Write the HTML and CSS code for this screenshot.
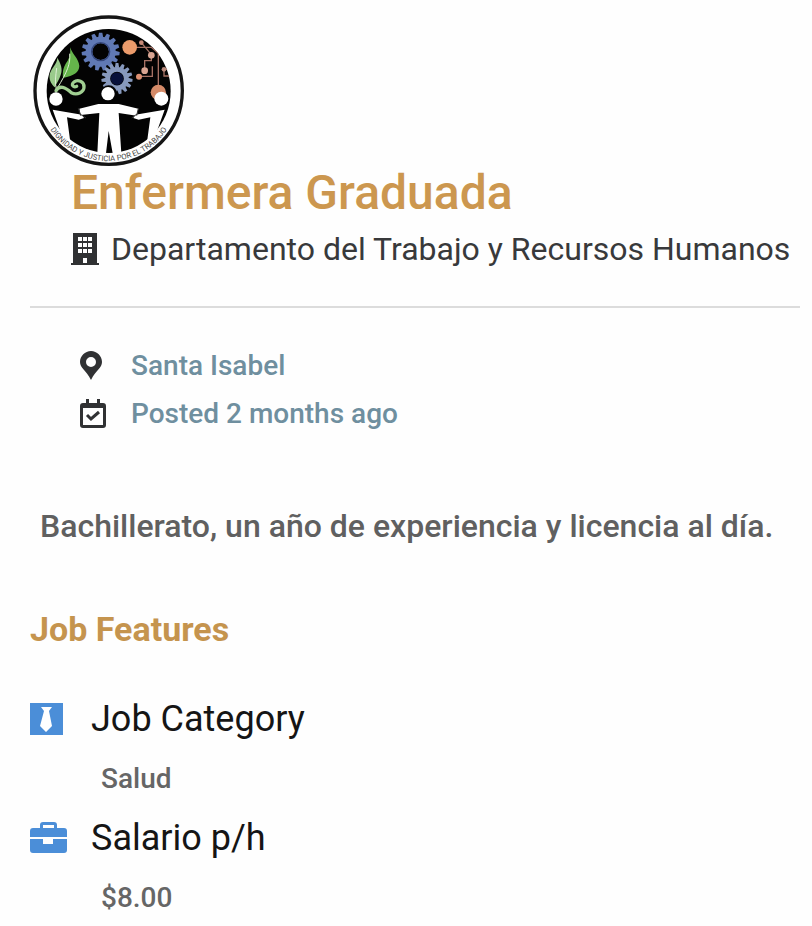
FILE: index.html
```html
<!DOCTYPE html>
<html lang="es">
<head>
  <meta charset="UTF-8">
  <meta name="viewport" content="width=device-width, initial-scale=1">
  <title>Enfermera Graduada</title>
  <link rel="stylesheet" href="styles.css">
</head>
<body>
  <main class="job">
    <header class="job-header">
      <svg class="logo" viewBox="15 21 456 456" role="img" aria-label="Departamento del Trabajo y Recursos Humanos">
        <defs>
          <clipPath id="disc"><circle cx="242" cy="249" r="187"/></clipPath>
          <path id="motto" d="M48 328A209 209 0 0 0 436 328"/>
          <path id="worker" d="M74 305L162 320L168 330L152 335L117 328L130 425L104 414L98 372Z"/>
          <g id="teeth">
            <path id="tooth" d="M-5-57H5L8-40H-8Z"/>
            <use href="#tooth" transform="rotate(24)"/>
            <use href="#tooth" transform="rotate(48)"/>
            <use href="#tooth" transform="rotate(72)"/>
            <use href="#tooth" transform="rotate(96)"/>
            <use href="#tooth" transform="rotate(120)"/>
            <use href="#tooth" transform="rotate(144)"/>
            <use href="#tooth" transform="rotate(168)"/>
            <use href="#tooth" transform="rotate(192)"/>
            <use href="#tooth" transform="rotate(216)"/>
            <use href="#tooth" transform="rotate(240)"/>
            <use href="#tooth" transform="rotate(264)"/>
            <use href="#tooth" transform="rotate(288)"/>
            <use href="#tooth" transform="rotate(312)"/>
            <use href="#tooth" transform="rotate(336)"/>
          </g>
        </defs>
        <circle cx="242" cy="248" r="221" fill="#fff" stroke="#151515" stroke-width="10"/>
        <circle cx="242" cy="249" r="186" fill="#030303"/>
        <!-- gears -->
        <g transform="translate(218 131)" fill="#6079b5">
          <use href="#teeth"/>
          <circle r="35" fill="none" stroke="#6079b5" stroke-width="20"/>
          <circle r="27" fill="none" stroke="#35477c" stroke-width="4"/>
        </g>
        <g transform="translate(267 212) scale(.82)" fill="#8799bd">
          <use href="#teeth"/>
          <circle r="34" fill="none" stroke="#8799bd" stroke-width="18"/>
          <circle r="23" fill="#07103a"/>
        </g>
        <!-- plant -->
        <path d="M126 118C135 142 152 151 154 174C153 193 139 203 105 210C103 188 107 174 119 158C127 145 128 132 126 118Z" fill="#65b54b"/>
        <path d="M88 149C98 166 105 183 98 201C94 214 88 222 80 238C67 225 62 213 66 196C72 177 87 170 88 149Z" fill="#9acb8c"/>
        <path d="M125 137C128 167 117 193 88 240M86 180C83 204 80 224 85 243" fill="none" stroke="#def0d5" stroke-width="3"/>
        <path d="M84 248C93 229 113 239 130 254C147 263 168 253 168 237C169 220 149 213 138 222C127 230 137 240 146 235" fill="none" stroke="#a1cf92" stroke-width="10" stroke-linecap="round"/>
        <!-- circuit -->
        <g clip-path="url(#disc)">
          <path d="M305 118H370L391 136V240M340 104L370 140V158H350V190M333 205H373V175M408 184V204H426M408 184H420" fill="none" stroke="#a57164" stroke-width="4"/>
          <circle cx="305" cy="118" r="22" fill="#eb9b6b"/>
          <circle cx="391" cy="253" r="23" fill="#d58b69"/>
          <circle cx="340" cy="104" r="7" fill="#c98b78"/>
          <circle cx="370" cy="142" r="10" fill="#d8a492"/>
          <circle cx="350" cy="188" r="10" fill="#d8a492"/>
          <circle cx="333" cy="206" r="9" fill="#dd9072"/>
          <circle cx="408" cy="184" r="7" fill="#b9897b"/>
        </g>
        <!-- people -->
        <circle cx="242" cy="257" r="25" fill="#030303"/>
        <g fill="#fff">
          <circle cx="240" cy="257" r="20"/>
          <circle cx="84" cy="273" r="20"/>
          <circle cx="400" cy="272" r="21"/>
          <use href="#worker"/>
          <use href="#worker" transform="translate(484 0) scale(-1 1)"/>
          <path d="M154 302L211 288H272L331 302L326 323L272 315L280 436H254L242 369L234 436H208L214 315L158 321Z"/>
        </g>
        <path d="M151 301L158 323M331 301L326 323M156 318L174 330M327 318L311 330" fill="none" stroke="#333" stroke-width="3"/>
        <text class="motto"><textPath href="#motto" startOffset="50%" text-anchor="middle">DIGNIDAD Y JUSTICIA POR EL TRABAJO</textPath></text>
      </svg>
      <h1 class="job-title">Enfermera Graduada</h1>
      <p class="company">
        <svg class="icon-building" viewBox="0 0 28 32" aria-hidden="true">
          <path fill="#303133" fill-rule="evenodd" d="M2 0H26V30H28V32H0V30H2ZM7 4V8H11V4ZM12 4V8H16V4ZM17 4V8H21V4ZM7 10V14H11V10ZM12 10V14H16V10ZM17 10V14H21V10ZM7 16V20H11V16ZM12 16V20H16V16ZM17 16V20H21V16ZM12 25V30H16V25Z"/>
        </svg>
        <span>Departamento del Trabajo y Recursos Humanos</span>
      </p>
    </header>

    <ul class="meta">
      <li>
        <svg class="icon-meta" viewBox="0 0 26 30" aria-hidden="true">
          <path fill="#303133" fill-rule="evenodd" d="M11 0C5 0 0 5 0 11C0 17 6 19 11 29C16 19 22 17 22 11C22 5 17 0 11 0ZM11 6A5 5 0 1 1 11 16A5 5 0 0 1 11 6Z"/>
        </svg>
        <a href="#">Santa Isabel</a>
      </li>
      <li>
        <svg class="icon-meta" viewBox="0 0 26 30" aria-hidden="true">
          <path fill="#303133" fill-rule="evenodd" d="M6 0H9V4H17V0H20V4H23Q26 4 26 7V26Q26 29 23 29H3Q0 29 0 26V7Q0 4 3 4H6ZM3 9V26H23V9Z"/>
          <path d="M7 16L11 20L19 13" fill="none" stroke="#303133" stroke-width="3"/>
        </svg>
        <a href="#">Posted 2 months ago</a>
      </li>
    </ul>

    <p class="description">Bachillerato, un año de experiencia y licencia al día.</p>

    <h2 class="section-title">Job Features</h2>
    <dl class="features">
      <div class="feature">
        <dt>
          <svg class="icon-feature" viewBox="0 0 38 34" aria-hidden="true">
            <path fill="#4b8ed8" d="M0 1H33V33H0Z"/>
            <path fill="#fff" d="M11 5H22L19 9L22 24L16 30L10 24L14 9Z"/>
          </svg>
          Job Category
        </dt>
        <dd>Salud</dd>
      </div>
      <div class="feature">
        <dt>
          <svg class="icon-feature" viewBox="0 0 38 34" aria-hidden="true">
            <path fill="#4b8ed8" fill-rule="evenodd" d="M10 7V4Q10 1 13 1H24Q27 1 27 4V7H34Q37 7 37 10V16H0V10Q0 7 3 7ZM13 7H24V4H13Z"/>
            <path fill="#4b8ed8" d="M0 18H13V23H23V18H37V29Q37 32 34 32H3Q0 32 0 29Z"/>
          </svg>
          Salario p/h
        </dt>
        <dd>$8.00</dd>
      </div>
    </dl>
  </main>
</body>
</html>
```
FILE: styles.css
```css
body {
  margin: 0;
  background: #fefefe;
  color: #38393b;
  font-family: Roboto, "Liberation Sans", sans-serif;
}
h1, h2, p, ul, dl, dd {
  margin: 0;
  padding: 0;
}
svg {
  display: block;
  flex: none;
}
.job {
  padding: 15px 12px 8px 30px;
}
.job-header {
  border-bottom: 2px solid #dcdcdc;
  padding-bottom: 37px;
}
.logo {
  width: 152px;
  height: 152px;
  margin-left: 3px;
}
.motto {
  font-size: 23px;
  fill: #444;
}
.job-title {
  margin-left: 41px;
  color: #cc974f;
  font-size: 48px;
  font-weight: 500;
  line-height: 52px;
}
.company {
  display: flex;
  align-items: center;
  gap: 12px;
  margin: 10px 0 0 41px;
  font-size: 32px;
  line-height: 40px;
  white-space: nowrap;
}
.icon-building {
  width: 28px;
  height: 32px;
}
.meta {
  list-style: none;
  margin: 34px 0 68px 50px;
}
.meta li {
  display: flex;
  align-items: center;
  gap: 25px;
  font-size: 28px;
  font-weight: 500;
  line-height: 48px;
}
.meta a {
  color: #6f8f9f;
  text-decoration: none;
}
.icon-meta {
  width: 26px;
  height: 30px;
}
.description {
  margin-left: 10px;
  color: #606060;
  font-size: 32px;
  font-weight: 500;
  line-height: 40px;
}
.section-title {
  margin: 63px 0 46px;
  color: #c5944e;
  font-size: 34px;
  font-weight: 700;
  line-height: 40px;
}
.feature {
  margin-bottom: 15px;
}
.feature dt {
  display: flex;
  align-items: center;
  gap: 23px;
  color: #151515;
  font-size: 36px;
  line-height: 48px;
}
.icon-feature {
  width: 38px;
  height: 34px;
}
.feature dd {
  margin: 16px 0 0 71px;
  color: #666;
  font-size: 28px;
  font-weight: 500;
  line-height: 40px;
}
```
